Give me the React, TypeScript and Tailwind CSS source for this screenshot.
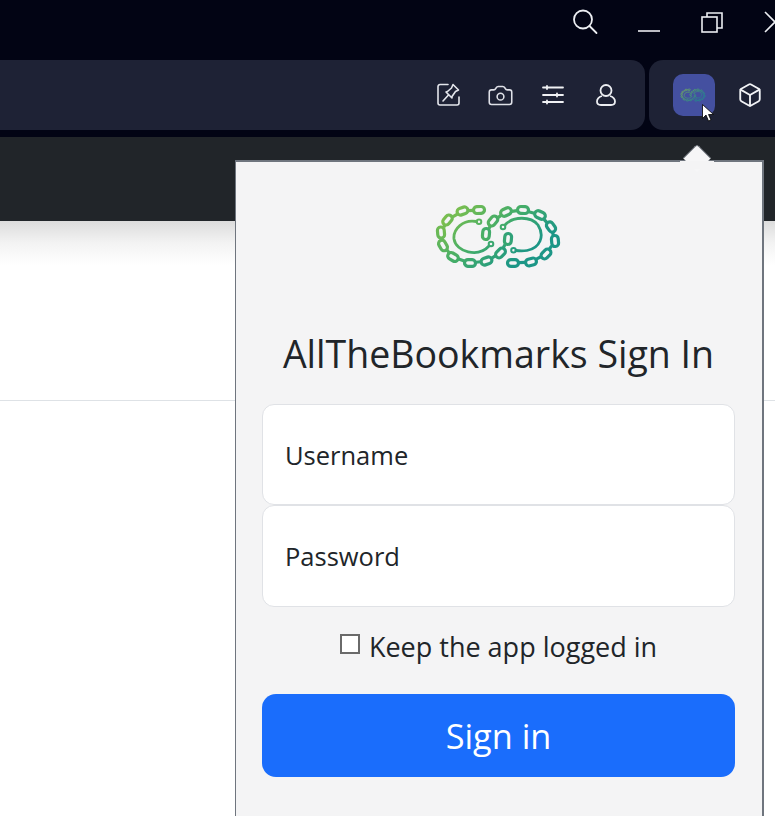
import { Box, Camera } from "lucide-react";

const FONT = "font-['Open_Sans','Noto_Sans',sans-serif]";

// [x, y, rotation] of each chain link, in the logo's 145x80 space
const LEFT_CHAIN: [number, number, number][] = [
  [56, 14, -3], [39.500, 15, -18], [24.500, 24, -50], [18, 36.500, 85], [20, 49.500, 60], [30, 61, 30], [47, 67, 2], [63.500, 65, -18], [77.500, 57, -45], [85, 43, -85],
];
const RIGHT_CHAIN: [number, number, number][] = [
  [63, 38, -85], [70, 25, -50], [83, 16, -25], [100, 14, 3], [117, 19, 25], [128, 31, 55], [132, 45, 85], [123, 58, -45], [108, 66, -15], [90, 67, 0],
];

function Chain({ links }: { links: [number, number, number][] }) {
  return (
    <>
      {links.map(([x, y, r], i) => {
        const next = links[i + 1];
        let connector = null;
        if (next) {
          const dist = Math.hypot(next[0] - x, next[1] - y);
          const t = 6 / dist;
          connector = (
            <line
              x1={x + (next[0] - x) * t}
              y1={y + (next[1] - y) * t}
              x2={next[0] - (next[0] - x) * t}
              y2={next[1] - (next[1] - y) * t}
            />
          );
        }
        return (
          <g key={`${x}-${y}`}>
            <rect x={x - 5.500} y={y - 3.400} width="11" height="6.800" rx="3.400" transform={`rotate(${r} ${x} ${y})`} />
            {connector}
          </g>
        );
      })}
    </>
  );
}

function ChainLogo({ className, id }: { className: string; id: string }) {
  return (
    <svg viewBox="0 0 145 80" className={className} fill="none">
      <defs>
        <linearGradient id={id} gradientUnits="userSpaceOnUse" x1="25" y1="8" x2="80" y2="76">
          <stop offset="0" stopColor="#86c24a" />
          <stop offset="0.55" stopColor="#45ad68" />
          <stop offset="1" stopColor="#1c9686" />
        </linearGradient>
      </defs>
      <g stroke={`url(#${id})`} strokeWidth="3.200">
        <Chain links={LEFT_CHAIN} />
        <Chain links={RIGHT_CHAIN} />
        <g strokeWidth="2.800">
          <path d="M53.500 25.500C40 23 30 33 31 43C33 56 55 62 66 50" strokeLinecap="round" />
          <circle cx="56" cy="25.700" r="2.300" strokeWidth="2" />
          <circle cx="68" cy="48" r="2.300" strokeWidth="2" />
          <path d="M82 29C90 20 108 20 115 29C122 40 117 52 104 54.500C100 55.200 96 55 93 54.500" strokeLinecap="round" />
          <circle cx="80" cy="31" r="2.300" strokeWidth="2" />
          <circle cx="90.500" cy="54.300" r="2.300" strokeWidth="2" />
        </g>
      </g>
    </svg>
  );
}

function PinEdit() {
  return (
    <svg viewBox="0 0 24 24" className="h-[24px] w-[24px]" fill="none" stroke="#e4e6ec" strokeWidth="1.600" strokeLinecap="round" strokeLinejoin="round">
      <path d="M12 1.500H4a2 2 0 0 0-2 2V20a2 2 0 0 0 2 2h17a2 2 0 0 0 2-2v-6" />
      <path d="M17 1.500L22.500 7L19.500 8.500L16 13.500V15L10 9L11.500 8.500L15.500 5z" />
      <path d="M12.500 12L7 18" />
    </svg>
  );
}

function Sliders() {
  return (
    <svg viewBox="0 0 24 24" className="h-[24px] w-[24px]" fill="none" stroke="#f0f1f4" strokeWidth="1.800" strokeLinecap="round">
      <path d="M2 4.500h20M2 12h20M2 19h20" />
      <path d="M6 3v3M16 10.500v3M6 17.500v3" />
    </svg>
  );
}

function UserIcon() {
  return (
    <svg viewBox="0 0 22 24" className="h-[24px] w-[22px]" fill="none" stroke="#eceef2" strokeWidth="1.800">
      <circle cx="11" cy="7.500" r="5.500" />
      <path d="M7 13c-3 1-5 3-5 5.500 0 2.500 2 3.500 4 3.500h10c2 0 4-1 4-3.500 0-2.500-2-4.500-5-5.500" />
    </svg>
  );
}

function Cursor() {
  return (
    <svg viewBox="0 0 12 18" className="absolute left-[702px] top-[104px] h-[18px] w-[12px]">
      <path d="M0.500 0.500v14l3.500-3.500 2.500 6 2.500-1-2.500-5.500h5z" fill="#fff" stroke="#000" strokeWidth="0.800" />
    </svg>
  );
}

export default function App() {
  return (
    <div className={`relative h-[816px] w-[775px] overflow-hidden bg-white ${FONT}`}>
      {/* title bar */}
      <div className="flex h-[60px] items-start justify-end bg-[#020414]">
        <svg viewBox="0 0 26 26" className="mr-[40px] mt-[9px] h-[26px] w-[26px]" fill="none" stroke="#eceef2" strokeWidth="1.800" strokeLinecap="round">
          <circle cx="11" cy="10.500" r="9" />
          <path d="M17.500 17l7 7" />
        </svg>
        <svg viewBox="0 0 22 4" className="mr-[41px] mt-[29px] h-[4px] w-[22px]" stroke="#eceef2" strokeWidth="1.600">
          <path d="M0 2h22" />
        </svg>
        <svg viewBox="0 0 22 22" className="mr-[41px] mt-[11px] h-[22px] w-[22px]" fill="none" stroke="#eceef2" strokeWidth="1.600">
          <rect x="1" y="6" width="15" height="15" />
          <path d="M6 6V2h15v15h-5" />
        </svg>
        <svg viewBox="0 0 22 22" className="mr-[-11px] mt-[11px] h-[22px] w-[22px] shrink-0" fill="none" stroke="#eceef2" strokeWidth="1.600">
          <path d="M1 1l20 20M21 1L1 21" />
        </svg>
      </div>

      {/* toolbar */}
      <div className="flex h-[70px] gap-[4px] bg-[#020414]">
        <div className="flex w-[645px] items-center justify-end rounded-r-[14px] bg-[#1e2235] pr-[28px]">
          <div className="mr-[27px]"><PinEdit /></div>
          <Camera size={27} strokeWidth={1.400} color="#dfe1e8" className="mr-[27px]" />
          <div className="mr-[30px]"><Sliders /></div>
          <UserIcon />
        </div>
        <div className="flex flex-1 items-center rounded-l-[14px] bg-[#1e2235] pl-[24px]">
          <div className="flex h-[42px] w-[42px] items-center justify-center rounded-[10px] bg-[#4450a0] pr-[3px]">
            <ChainLogo id="fav" className="h-[16px] w-[29px]" />
          </div>
          <Box size={26} strokeWidth={1.700} color="#f2f3f6" className="ml-[22px]" />
        </div>
      </div>

      <div className="h-[7px] bg-[#020414]" />
      <div className="h-[84px] bg-[#212529]" />

      {/* page behind the popup */}
      <div className="h-[180px] border-b border-[#dee2e6] bg-white">
        <div className="h-[44px] bg-linear-to-b from-[#dcdcdc] via-[#f3f3f3] via-50% to-white" />
      </div>

      {/* popup */}
      <div className="absolute left-[235px] top-[160px] flex h-[670px] w-[529px] flex-col items-center border-t-2 border-r-2 border-l border-[#6f757e] bg-[#f4f4f5] pl-[26px] pr-[27px] pt-[34px]">
        <ChainLogo id="main" className="mr-[7px] h-[80px] w-[145px] shrink-0" />
        <h1 className="mt-[54px] whitespace-nowrap text-[37.500px] leading-[48px] font-normal text-[#212529]">AllTheBookmarks Sign In</h1>
        <div className="mt-[26px] w-full">
          <div className="flex h-[101px] items-center rounded-[12px] border border-[#e0e2e6] bg-white pl-[22px] pt-[2px] text-[25.500px] text-[#212529]">Username</div>
          <div className="flex h-[102px] items-center rounded-[12px] border border-[#e0e2e6] bg-white pl-[22px] text-[25.500px] text-[#212529]">Password</div>
        </div>
        <div className="mt-[19px] flex h-[36px] items-center gap-[9px] text-[27px] text-[#212529]">
          <span className="h-[20px] w-[20px] border-2 border-[#6a6a6a] bg-white" />
          <span className="pt-[7px]">Keep the app logged in</span>
        </div>
        <div className="mt-[32px] flex h-[83px] w-full items-center justify-center rounded-[14px] bg-[#1a6dfc] text-[34.300px] text-white">Sign in</div>
      </div>

      {/* popup arrow */}
      <div className="absolute left-[687px] top-[148px] h-[20px] w-[20px] rotate-45 rounded-tl-[3px] border-t border-l border-[#6f757e] bg-[#f6f6f7]" />
      <div className="absolute left-[680px] top-[161px] h-[8px] w-[34px] bg-[#f4f4f5]" />
      <Cursor />
    </div>
  );
}
